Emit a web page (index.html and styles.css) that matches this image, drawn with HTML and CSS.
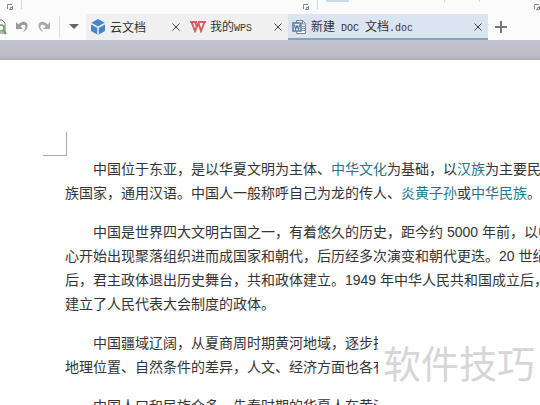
FILE: index.html
```
<!DOCTYPE html>
<html lang="zh-CN">
<head>
    <meta charset="utf-8">
    <title>新建 DOC 文档.doc</title>
    <link rel="stylesheet" href="styles.css">
</head>
<body>
    <header>
        <div class="ribbon">
            <div class="group first">
                <svg width="6" height="6"><path d="M.5 5V.5H5M5.500 2V5.500H2M3.500 5V3.500H5" /></svg>
            </div>
            <div class="group second">
                <svg width="6" height="6"><path d="M.5 5V.5H5M5.500 2V5.500H2M3.500 5V3.500H5" /></svg>
            </div>
            <div class="selected-tool"></div>
            <div class="tick"></div>
            <div class="tick"></div>
            <svg class="last" width="6" height="6"><path d="M.5 5V.5H5M5.500 2V5.500H2M3.500 5V3.500H5" /></svg>
        </div>
        <div class="tabbar">
            <div class="tools">
                <button class="preview" aria-label="打印预览">
                    <svg width="7" height="16" viewBox="0 0 7 16"><path d="M0 1h2l3 3v10H0" fill="none" stroke="#777" /><circle cx="1" cy="9" r="3" fill="#fff" stroke="#6ba355" stroke-width="1.500" /><path d="M3 11l3 4" stroke="#6ba355" stroke-width="2" /></svg>
                </button>
                <button aria-label="撤销">
                    <svg width="14" height="14" viewBox="0 0 14 14"><path d="M1 2v7h7L5.500 6.500C7 4.500 10 4 10.500 6.500c.3 2-1.500 4-3 6 3.500-2 5.500-4.500 5-7.500C11.800 1 6.500.5 3.500 4.500z" fill="#999" /></svg>
                </button>
                <button aria-label="恢复">
                    <svg width="14" height="14" viewBox="0 0 14 14"><path d="M13 2v7H6l2.500-2.500C7 4.500 4 4 3.500 6.500c-.3 2 1.500 4 3 6C3 10.500 1 8 1.500 5 2.200 1 7.500.5 10.500 4.500z" fill="#aaa" /></svg>
                </button>
                <button class="more" aria-label="更多">
                    <svg width="10" height="6" viewBox="0 0 10 6"><path d="M0 0h10L5 5z" fill="#666" /></svg>
                </button>
            </div>
            <nav class="tabs">
                <div class="tab cloud">
                    <svg width="16" height="18" viewBox="0 0 16 18"><path d="M8 1l7 4v8l-7 4-7-4V5z" fill="#4a84c8" /><path d="M1 5.500l7 4 7-4M8 9.500V17" fill="none" stroke="#e8f0fa" stroke-width="1.500" /></svg>
                    <a href="#">云文档</a>
                    <button class="close" aria-label="关闭 云文档"><svg width="8" height="8"><path d="M.5.5l7 7M7.500.5l-7 7" /></svg></button>
                </div>
                <div class="tab">
                    <svg width="16" height="12" viewBox="0 0 16 12"><path d="M0 1h7M9 1h7M1.500 1L5 10l3.500-8L11 10l3.500-9M5 1l1.500 4" fill="none" stroke="#cf6264" stroke-width="2" /></svg>
                    <a href="#">我的<span class="latin">WPS</span></a>
                    <button class="close" aria-label="关闭 我的WPS"><svg width="8" height="8"><path d="M.5.5l7 7M7.500.5l-7 7" /></svg></button>
                </div>
                <div class="tab active">
                    <svg width="15" height="16" viewBox="0 0 15 16"><path d="M4.500 1.500h6l3 3v10h-9z" fill="#fff" stroke="#7d8794" /><path d="M10.500 1v4H14M10 7.500h3M10 9.500h3M10 11.500h3" fill="none" stroke="#7d8794" /><path d="M1 4h8v8H1z" fill="#e9f1f9" stroke="#507ba0" stroke-width="1.500" /><path d="M2.500 5.500l1 5L5 6.500l1.500 4 1-5" fill="none" stroke="#345f88" /></svg>
                    <a href="#">新建<span class="latin"> DOC </span>文档<span class="latin">.doc</span></a>
                    <button class="close" aria-label="关闭 新建 DOC 文档.doc"><svg width="8" height="8"><path d="M.5.5l7 7M7.500.5l-7 7" /></svg></button>
                </div>
            </nav>
            <button class="add" aria-label="新建"><svg width="12" height="12"><path d="M6 0v12M0 6h12" stroke="#777" stroke-width="2" /></svg></button>
        </div>
    </header>
    <div class="workspace"></div>
    <main class="page">
        <div class="crop-mark"></div>
        <article>
            <p>中国位于东亚，是以华夏文明为主体、<a href="#">中华文化</a>为基础，以<a href="#">汉族</a>为主要民族<br>
            族国家，通用汉语。中国人一般称呼自己为龙的传人、<a href="#">炎黄子孙</a>或<a href="#">中华民族</a>。</p>
            <p>中国是世界四大文明古国之一，有着悠久的历史，距今约 5000 年前，以中<br>
            心开始出现聚落组织进而成国家和朝代，后历经多次演变和朝代更迭。20 世纪<br>
            后，君主政体退出历史舞台，共和政体建立。1949 年中华人民共和国成立后，<br>
            建立了人民代表大会制度的政体。</p>
            <p>中国疆域辽阔，从夏商周时期黄河地域，逐步扩<br>
            地理位置、自然条件的差异，人文、经济方面也各有</p>
            <p>中国人口和民族众多，先秦时期的华夏人在黄河</p>
        </article>
        <div class="watermark">软件技巧</div>
    </main>
</body>
</html>
```

FILE: styles.css
```
* {
    box-sizing: border-box;
}

body {
    margin: 0;
    height: 100vh;
    overflow: hidden;
    display: flex;
    flex-direction: column;
    background: #fff;
    color: #333;
    font-family: "Liberation Sans", "Noto Sans CJK SC", sans-serif;
}

svg {
    display: block;
    flex: none;
}

button {
    padding: 0;
    border: none;
    background: none;
    cursor: pointer;
}

a {
    color: inherit;
    text-decoration: none;
}

header {
    flex: none;
    background: #fbfbfb;
}

.ribbon {
    height: 14px;
    display: flex;
    align-items: flex-start;
}

.ribbon path {
    fill: none;
    stroke: #7b879b;
}

.group {
    height: 9px;
    padding: 4px 8px 0 0;
    display: flex;
    justify-content: flex-end;
    border-right: 1px solid #d4d4d8;
}

.first {
    width: 22px;
}

.second {
    width: 297px;
}

.selected-tool {
    width: 23px;
    height: 2px;
    margin: 0 61px 0 8px;
    background: #c9daee;
}

.tick {
    width: 35px;
    height: 2px;
    border-right: 1px solid #d4d4d8;
}

.last {
    margin: 4px 0 0 54px;
}

.tabbar {
    height: 26px;
    display: flex;
}

.tools {
    width: 86px;
    display: flex;
    align-items: center;
    gap: 8px;
}

.more {
    height: 22px;
    padding-left: 9px;
    border-left: 1px solid #ddd;
}

.tabs {
    display: flex;
    flex: 0 1 402px;
}

.tab {
    flex: 0 0 102px;
    display: flex;
    align-items: center;
    padding: 0 6px 0 4px;
    gap: 4px;
    background: #f0f0f1;
    font-size: 12px;
    line-height: 24px;
    white-space: nowrap;
}

.tab a {
    padding-top: 2px;
}

.cloud {
    flex-basis: 100px;
}

.active {
    flex: 1;
    background: #dbe5f1;
    box-shadow: inset 0 -2px #84a2c6;
}

.latin {
    font-family: "Liberation Mono", monospace;
    font-size: 10px;
    white-space: pre;
}

.close {
    margin-left: auto;
}

.close path {
    stroke: #444;
}

.add {
    margin-left: 7px;
}

.workspace {
    flex: none;
    height: 20px;
    background: linear-gradient(#c1c2ce, #bebfc9 75%, #acacb2);
}

.page {
    position: relative;
    flex: 1;
    padding: 72px 0 0 43px;
    overflow: hidden;
}

.crop-mark {
    width: 24px;
    height: 24px;
    border: solid #aaa;
    border-width: 0 1px 1px 0;
}

article {
    padding: 1px 0 0 22px;
    font-size: 14px;
    line-height: 24px;
    white-space: nowrap;
}

p {
    margin: 0 0 15px;
    text-indent: 28px;
}

article a {
    color: #247684;
}

.watermark {
    position: absolute;
    right: 0;
    bottom: 0;
    width: 162px;
    height: 76px;
    padding-left: 5px;
    background: #fff;
    color: #d6d6d6;
    font-size: 38px;
    line-height: 72px;
    white-space: nowrap;
}
```
